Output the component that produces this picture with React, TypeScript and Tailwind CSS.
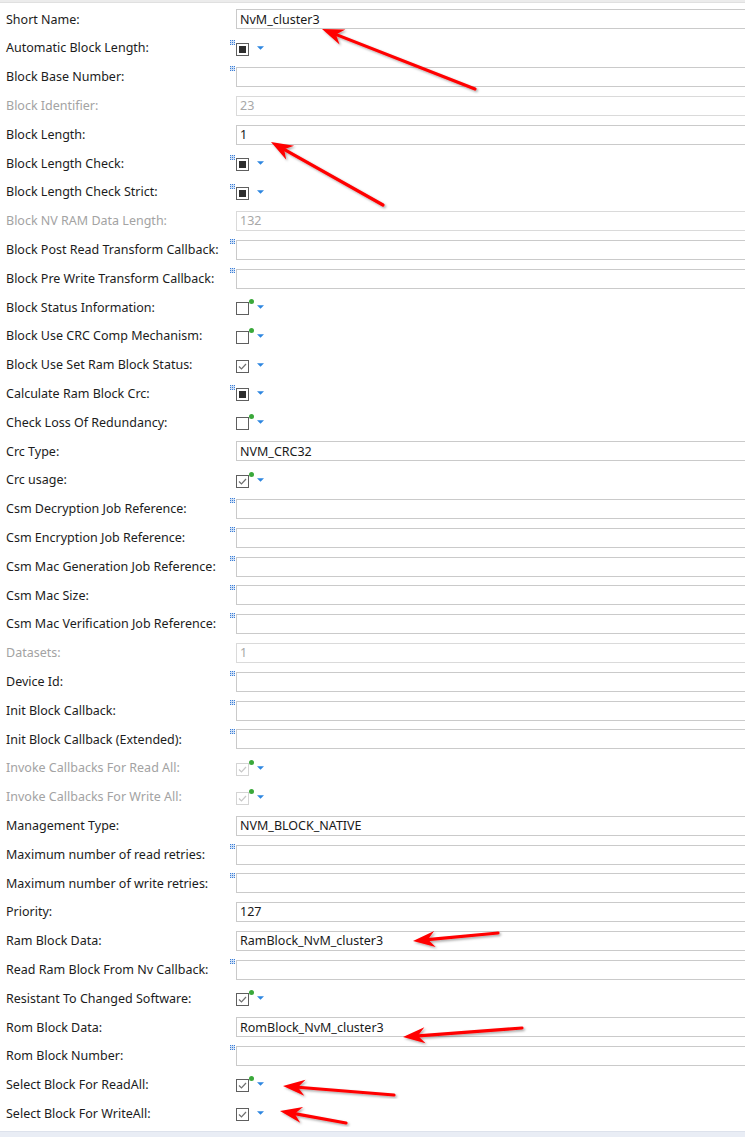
import React from "react";

type Ctl =
  | { k: "input"; v: string }
  | { k: "empty" }
  | { k: "dis"; v: string }
  | { k: "tri" }
  | { k: "unstar" }
  | { k: "check" }
  | { k: "checkstar" }
  | { k: "discheckstar" };

type Row = { label: string; c: Ctl; disabled?: boolean };

const rows: Row[] = [
  { label: "Short Name:", c: { k: "input", v: "NvM_cluster3" } },
  { label: "Automatic Block Length:", c: { k: "tri" } },
  { label: "Block Base Number:", c: { k: "empty" } },
  { label: "Block Identifier:", c: { k: "dis", v: "23" }, disabled: true },
  { label: "Block Length:", c: { k: "input", v: "1" } },
  { label: "Block Length Check:", c: { k: "tri" } },
  { label: "Block Length Check Strict:", c: { k: "tri" } },
  { label: "Block NV RAM Data Length:", c: { k: "dis", v: "132" }, disabled: true },
  { label: "Block Post Read Transform Callback:", c: { k: "empty" } },
  { label: "Block Pre Write Transform Callback:", c: { k: "empty" } },
  { label: "Block Status Information:", c: { k: "unstar" } },
  { label: "Block Use CRC Comp Mechanism:", c: { k: "unstar" } },
  { label: "Block Use Set Ram Block Status:", c: { k: "check" } },
  { label: "Calculate Ram Block Crc:", c: { k: "tri" } },
  { label: "Check Loss Of Redundancy:", c: { k: "unstar" } },
  { label: "Crc Type:", c: { k: "input", v: "NVM_CRC32" } },
  { label: "Crc usage:", c: { k: "checkstar" } },
  { label: "Csm Decryption Job Reference:", c: { k: "empty" } },
  { label: "Csm Encryption Job Reference:", c: { k: "empty" } },
  { label: "Csm Mac Generation Job Reference:", c: { k: "empty" } },
  { label: "Csm Mac Size:", c: { k: "empty" } },
  { label: "Csm Mac Verification Job Reference:", c: { k: "empty" } },
  { label: "Datasets:", c: { k: "dis", v: "1" }, disabled: true },
  { label: "Device Id:", c: { k: "empty" } },
  { label: "Init Block Callback:", c: { k: "empty" } },
  { label: "Init Block Callback (Extended):", c: { k: "empty" } },
  { label: "Invoke Callbacks For Read All:", c: { k: "discheckstar" }, disabled: true },
  { label: "Invoke Callbacks For Write All:", c: { k: "discheckstar" }, disabled: true },
  { label: "Management Type:", c: { k: "input", v: "NVM_BLOCK_NATIVE" } },
  { label: "Maximum number of read retries:", c: { k: "empty" } },
  { label: "Maximum number of write retries:", c: { k: "empty" } },
  { label: "Priority:", c: { k: "input", v: "127" } },
  { label: "Ram Block Data:", c: { k: "input", v: "RamBlock_NvM_cluster3" } },
  { label: "Read Ram Block From Nv Callback:", c: { k: "empty" } },
  { label: "Resistant To Changed Software:", c: { k: "checkstar" } },
  { label: "Rom Block Data:", c: { k: "input", v: "RomBlock_NvM_cluster3" } },
  { label: "Rom Block Number:", c: { k: "empty" } },
  { label: "Select Block For ReadAll:", c: { k: "checkstar" } },
  { label: "Select Block For WriteAll:", c: { k: "check" } },
];

function DotIcon() {
  return (
    <svg width="5" height="5" viewBox="0 0 5 5" className="block">
      <rect x="0" y="0" width="5" height="5" fill="#cfe0f7" />
      <rect x="0" y="0" width="1" height="1" fill="#3d7fd6" />
      <rect x="2" y="0" width="1" height="1" fill="#3d7fd6" />
      <rect x="4" y="0" width="1" height="1" fill="#3d7fd6" />
      <rect x="0" y="2" width="1" height="1" fill="#3d7fd6" />
      <rect x="2" y="2" width="1" height="1" fill="#3d7fd6" />
      <rect x="4" y="2" width="1" height="1" fill="#3d7fd6" />
      <rect x="0" y="4" width="1" height="1" fill="#3d7fd6" />
      <rect x="2" y="4" width="1" height="1" fill="#3d7fd6" />
      <rect x="4" y="4" width="1" height="1" fill="#3d7fd6" />
    </svg>
  );
}

function Tri() {
  return (
    <svg width="7" height="4" viewBox="0 0 7 4" className="block">
      <path d="M0 0.3 H7 L3.5 3.8 Z" fill="#2d86e0" />
    </svg>
  );
}

function Checkbox({ kind }: { kind: "tri" | "unstar" | "check" | "checkstar" | "discheckstar" }) {
  const disabled = kind === "discheckstar";
  const star = kind === "unstar" || kind === "checkstar" || kind === "discheckstar";
  const checked = kind === "check" || kind === "checkstar" || kind === "discheckstar";
  return (
    <div className="flex items-center h-full pt-[3px]">
      <div className="relative w-[13px] h-[13px] mr-[8px]">
        {kind === "tri" && (
          <div className="absolute left-[-6px] top-[-3px]">
            <DotIcon />
          </div>
        )}
        <div
          className={
            disabled
              ? "w-[13px] h-[13px] border border-[#d4d4d4] bg-white flex items-center justify-center"
              : "w-[13px] h-[13px] border-[1.5px] border-[#5f5f5f] bg-white flex items-center justify-center"
          }
        >
          {kind === "tri" && <div className="w-[7px] h-[7px] bg-[#2e2e2e]" />}
          {checked && (
            <svg width="11" height="11" viewBox="0 0 11 11">
              <path
                d="M2 5.5 L4.5 8 L9 3"
                fill="none"
                stroke={disabled ? "#c8c8c8" : "#707070"}
                strokeWidth="1.2"
              />
            </svg>
          )}
        </div>
        {star && (
          <div className="absolute left-[12.5px] top-[-3px] w-[5px] h-[5px] rounded-full bg-[#3aa83a]" />
        )}
      </div>
      <div className="mt-[-3px]">
        <Tri />
      </div>
    </div>
  );
}

function Control({ c }: { c: Ctl }) {
  if (c.k === "input" || c.k === "dis" || c.k === "empty") {
    const v = c.k === "empty" ? "" : c.v;
    return (
      <div className="relative flex-1 h-full flex items-center">
        {c.k === "empty" && (
          <div className="absolute left-[-6px] top-[4px]">
            <DotIcon />
          </div>
        )}
        <div
          className={
            "w-full h-[20px] mt-[1px] border border-r-0 border-[#cacaca] bg-white pl-[3px] pt-[1px] flex items-center text-[12.5px] leading-none " +
            (c.k === "dis" ? "text-[#a8a8a8] border-[#dadada]" : "text-[#1a1a1a]")
          }
        >
          {v}
        </div>
      </div>
    );
  }
  return <Checkbox kind={c.k} />;
}

type Arrow = { x1: number; y1: number; x2: number; y2: number };
const arrows: Arrow[] = [
  { x1: 475, y1: 89, x2: 322, y2: 29 },
  { x1: 383, y1: 205, x2: 271, y2: 142 },
  { x1: 498, y1: 933, x2: 413, y2: 941 },
  { x1: 522, y1: 1028, x2: 403, y2: 1037 },
  { x1: 394, y1: 1095, x2: 283, y2: 1086 },
  { x1: 346, y1: 1123, x2: 280, y2: 1111 },
];

function Arrows() {
  return (
    <svg
      className="absolute left-0 top-0 pointer-events-none"
      width="745"
      height="1137"
      viewBox="0 0 745 1137"
    >
      <defs>
        <filter id="sh" x="-20%" y="-20%" width="140%" height="140%">
          <feDropShadow dx="1.5" dy="1.5" stdDeviation="1.2" floodColor="#000" floodOpacity="0.35" />
        </filter>
      </defs>
      {arrows.map((a, i) => {
        const dx = a.x2 - a.x1;
        const dy = a.y2 - a.y1;
        const len = Math.sqrt(dx * dx + dy * dy);
        const ux = dx / len;
        const uy = dy / len;
        const hl = 22;
        const hw = 8;
        const bx = a.x2 - ux * hl;
        const by = a.y2 - uy * hl;
        const px = -uy;
        const py = ux;
        const pts = `${a.x2},${a.y2} ${bx + px * hw},${by + py * hw} ${a.x2 - ux * 15},${a.y2 - uy * 15} ${bx - px * hw},${by - py * hw}`;
        return (
          <g key={i} filter="url(#sh)">
            <line
              x1={a.x1}
              y1={a.y1}
              x2={a.x2 - ux * 12}
              y2={a.y2 - uy * 12}
              stroke="#ff0000"
              strokeWidth="3.2"
              strokeLinecap="round"
            />
            <polygon points={pts} fill="#ff0000" />
          </g>
        );
      })}
    </svg>
  );
}

export default function App() {
  return (
    <div
      className="relative w-[745px] h-[1137px] bg-white overflow-hidden"
      style={{ fontFamily: '"Noto Sans", "Open Sans", sans-serif' }}
    >
      <div className="h-[3px] bg-[#ececec] border-b border-[#e0e0e0]" />
      <div className="flex flex-col pt-[1.6px]">
        {rows.map((r, i) => (
          <div key={i} className="flex h-[28.8px] items-stretch">
            <div
              className={
                "w-[236px] shrink-0 pl-[6px] pt-[2px] flex items-center text-[12.5px] " +
                (r.disabled ? "text-[#a3a3a3]" : "text-[#1c1c1c]")
              }
            >
              {r.label}
            </div>
            <Control c={r.c} />
          </div>
        ))}
      </div>
      <div className="absolute left-0 bottom-0 w-full h-[6px] bg-[#e9edf5] border-t border-[#dde2ec]" />
      <Arrows />
    </div>
  );
}
